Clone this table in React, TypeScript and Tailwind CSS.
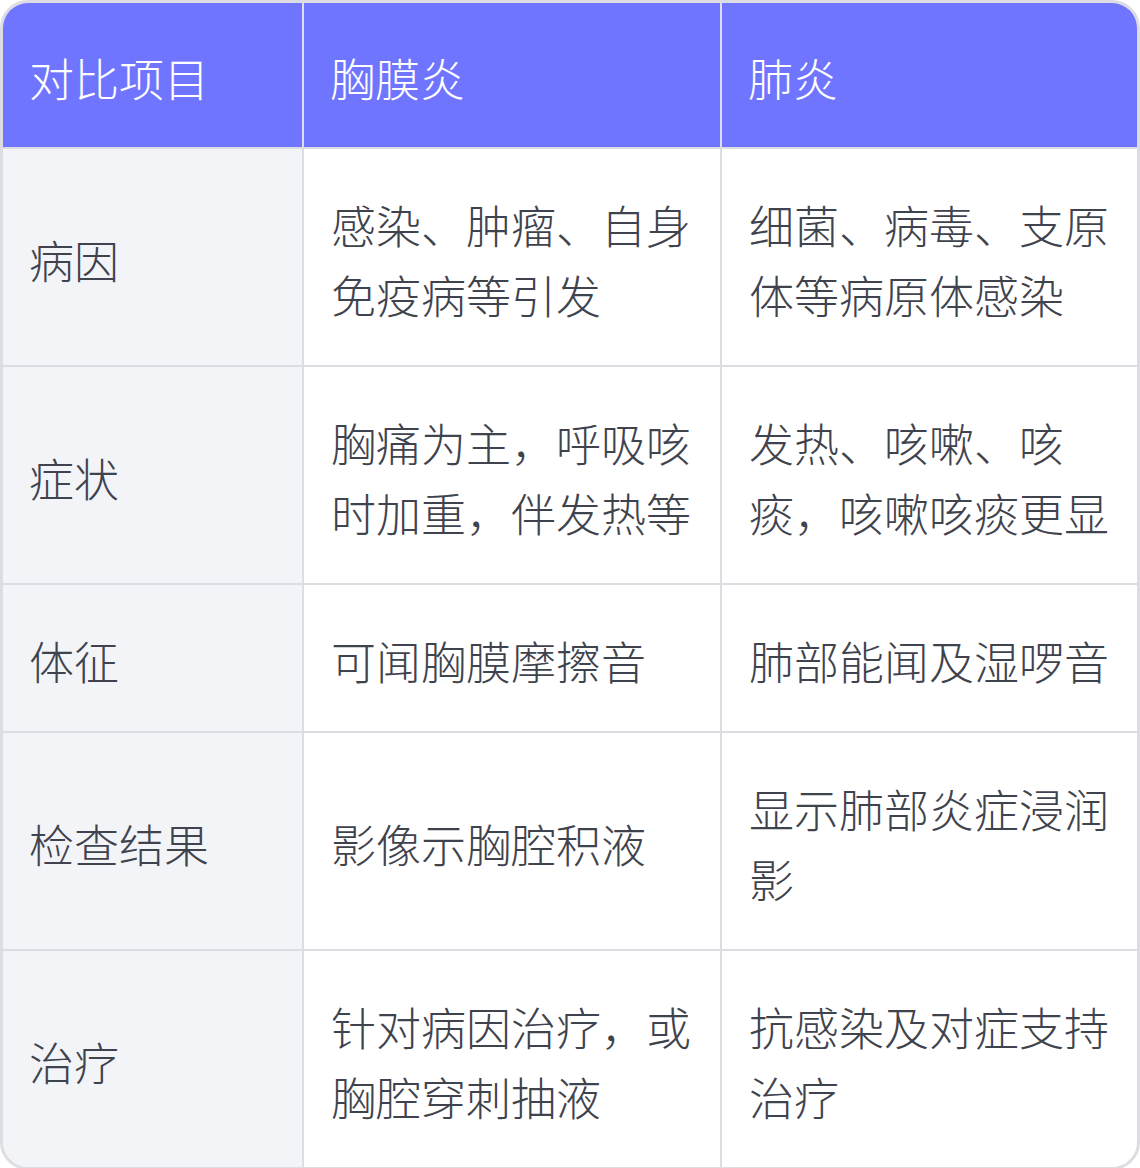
const rows: [string, string, string][] = [
  ['病因', '感染、肿瘤、自身免疫病等引发', '细菌、病毒、支原体等病原体感染'],
  ['症状', '胸痛为主，呼吸咳时加重，伴发热等', '发热、咳嗽、咳痰，咳嗽咳痰更显'],
  ['体征', '可闻胸膜摩擦音', '肺部能闻及湿啰音'],
  ['检查结果', '影像示胸腔积液', '显示肺部炎症浸润影'],
  ['治疗', '针对病因治疗，或胸腔穿刺抽液', '抗感染及对症支持治疗'],
];

export default function App() {
  return (
    <div
      className="w-[1140px] h-[1168px] bg-white text-[45px] font-light"
      style={{ fontFamily: '"Noto Sans CJK SC", "Noto Sans", sans-serif' }}
    >
      <div className="overflow-hidden rounded-[28px] border-[3px] border-[#dcdce2]">
        <div className="grid grid-cols-[299px_416px_1fr] gap-[2px] bg-[#dcdde3]">
          {['对比项目', '胸膜炎', '肺炎'].map((h) => (
            <div key={h} className="bg-[#7075ff] px-[26px] pt-[40px] pb-[34px] leading-[70px] text-white">
              {h}
            </div>
          ))}
          {rows.map(([label, a, b]) => (
            <>
              <div key={label} className="flex items-center bg-[#f3f4f8] px-[26px] pt-[41px] pb-[35px] leading-[70px] text-[#3f434d]">
                {label}
              </div>
              <div className="flex items-center bg-white px-[27px] pt-[41px] pb-[35px] leading-[70px] text-[#3f434d]">
                <span>{a}</span>
              </div>
              <div className="flex items-center bg-white px-[27px] pt-[41px] pb-[35px] leading-[70px] text-[#3f434d]">
                <span>{b}</span>
              </div>
            </>
          ))}
        </div>
      </div>
    </div>
  );
}
